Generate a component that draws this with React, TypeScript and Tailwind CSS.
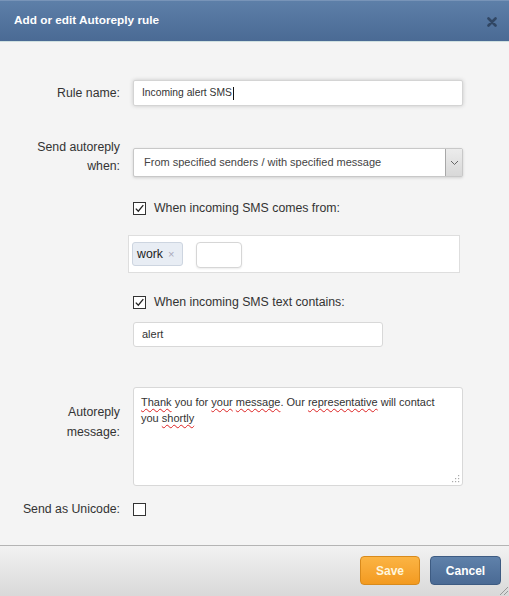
import React from "react";

const font = { fontFamily: '"Liberation Sans", Arial, sans-serif' };

function Check({ checked }: { checked: boolean }) {
  return (
    <div className="w-[13px] h-[13px] border border-[#333] bg-white flex items-center justify-center shrink-0">
      {checked && (
        <svg width="11" height="11" viewBox="0 0 11 11">
          <path d="M1.8 5.6 L4.3 8.2 L9.3 2.2" fill="none" stroke="#222" strokeWidth="1.3" />
        </svg>
      )}
    </div>
  );
}

function W({ children }: { children: React.ReactNode }) {
  return <span className="underline decoration-wavy decoration-[#d22] decoration-[1px] underline-offset-[2px]">{children}</span>;
}

export default function App() {
  return (
    <div style={font} className="w-[509px] h-[596px] bg-[#f4f4f4] flex flex-col overflow-hidden relative text-[#333]">
      {/* Header */}
      <div className="h-[42px] shrink-0 bg-gradient-to-b from-[#5d7fa8] to-[#4a6a94] border-t border-t-[#7894b8] border-b border-b-[#cfe0e0] flex items-center justify-between pl-[14px] pr-[12px]">
        <span className="text-white font-bold text-[11.8px]">Add or edit Autoreply rule</span>
        <svg width="10" height="10" viewBox="0 0 10 10" className="mt-[2px]">
          <path d="M1.5 1.5 L8.5 8.5 M8.5 1.5 L1.5 8.5" stroke="#2b3f5a" strokeWidth="2.6" strokeLinecap="round" opacity="0.85" />
        </svg>
      </div>

      {/* Body */}
      <div className="flex-1 flex flex-col text-[12.3px]">
        {/* Rule name */}
        <div className="flex items-center mt-[38px]">
          <div className="w-[120px] text-right">Rule name:</div>
          <div className="ml-[13px] w-[330px] h-[26px] bg-white border border-[#d4d4d4] rounded-[2px] shadow-[0_0_4px_rgba(0,0,0,0.18)] flex items-center pl-[8px] text-[10.3px] text-[#333]">
            Incoming alert SMS<span className="inline-block w-[1px] h-[13px] bg-[#111] ml-[1px]" />
          </div>
        </div>

        {/* Send autoreply when */}
        <div className="flex items-start mt-[32px]">
          <div className="w-[120px] text-right leading-[19px]">
            Send autoreply
            <br />
            when:
          </div>
          <div className="ml-[13px] mt-[10px] w-[330px] h-[29px] bg-white border border-[#c8c8c8] rounded-[2px] shadow-[0_1px_3px_rgba(0,0,0,0.15)] flex items-stretch">
            <div className="flex-1 flex items-center pl-[10px] text-[11px] text-[#444]">From specified senders / with specified message</div>
            <div className="w-[17px] bg-gradient-to-b from-[#ececec] to-[#d8d8d8] border-l border-[#a8a8a8] flex items-center justify-center">
              <svg width="9" height="6" viewBox="0 0 9 6">
                <path d="M1 1 L4.5 4.5 L8 1" fill="none" stroke="#666" strokeWidth="1" />
              </svg>
            </div>
          </div>
        </div>

        {/* Checkbox 1 */}
        <div className="flex items-center mt-[22px] pl-[133px]">
          <Check checked />
          <span className="ml-[8px]">When incoming SMS comes from:</span>
        </div>

        {/* Tag box */}
        <div className="ml-[128px] mt-[18px] w-[332px] h-[38px] bg-white border border-[#dedede] flex items-center pl-[3px]">
          <div className="h-[24px] w-[51px] rounded-[3px] border border-[#cdd5e0] bg-[#e8edf4] flex items-center pl-[4px] text-[12.3px] text-[#222]">
            work<span className="ml-[5px] text-[#aab] text-[11px]">×</span>
          </div>
          <div className="ml-[13px] h-[26px] w-[46px] rounded-[4px] border border-[#d6d6d6] bg-white shadow-[0_1px_2px_rgba(0,0,0,0.08)] mt-[2px]" />
        </div>

        {/* Checkbox 2 */}
        <div className="flex items-center mt-[20px] pl-[133px]">
          <Check checked />
          <span className="ml-[8px]">When incoming SMS text contains:</span>
        </div>

        {/* alert input */}
        <div className="ml-[133px] mt-[10px] w-[250px] h-[25px] bg-white border border-[#d8d8d8] rounded-[3px] flex items-center pl-[8px] text-[11px] text-[#333]">
          alert
        </div>

        {/* Autoreply message */}
        <div className="flex items-start mt-[40px]">
          <div className="w-[120px] text-right leading-[20px] mt-[15px]">
            Autoreply
            <br />
            message:
          </div>
          <div className="ml-[13px] w-[330px] h-[99px] bg-white border border-[#d8d8d8] rounded-[3px] relative px-[7px] pt-[6px] text-[11px] leading-[16px] text-[#333]">
            <W>Thank</W> you for <W>your</W> <W>message</W>. Our <W>representative</W> will contact you <W>shortly</W>
            <svg width="8" height="8" viewBox="0 0 8 8" className="absolute right-[2px] bottom-[2px]">
              <g fill="#aaa">
                <rect x="6" y="0" width="1.2" height="1.2" />
                <rect x="3" y="3" width="1.2" height="1.2" />
                <rect x="6" y="3" width="1.2" height="1.2" />
                <rect x="0" y="6" width="1.2" height="1.2" />
                <rect x="3" y="6" width="1.2" height="1.2" />
                <rect x="6" y="6" width="1.2" height="1.2" />
              </g>
            </svg>
          </div>
        </div>

        {/* Unicode */}
        <div className="flex items-center mt-[14px]">
          <div className="w-[120px] text-right">Send as Unicode:</div>
          <div className="ml-[13px]">
            <Check checked={false} />
          </div>
        </div>
      </div>

      {/* Footer */}
      <div className="h-[51px] shrink-0 border-t border-[#b4b4b4] bg-gradient-to-b from-[#f2f2f2] to-[#d9d9d9] flex items-start justify-end pr-[8px] pt-[10px] gap-[10px]">
        <div className="w-[60px] h-[29px] rounded-[4px] border border-[#d88a1c] bg-gradient-to-b from-[#fbb443] to-[#f39a1f] flex items-center justify-center text-[12px] font-bold text-[#fff6dc]">
          Save
        </div>
        <div className="w-[71px] h-[29px] rounded-[4px] border border-[#3d5b82] bg-gradient-to-b from-[#5f81aa] to-[#4a6a94] flex items-center justify-center text-[12px] font-bold text-white">
          Cancel
        </div>
      </div>
      <svg width="12" height="12" viewBox="0 0 12 12" className="absolute right-0 bottom-0">
        <path d="M11 3 L3 11 M11 7 L7 11" stroke="#999" strokeWidth="1" />
      </svg>
    </div>
  );
}
